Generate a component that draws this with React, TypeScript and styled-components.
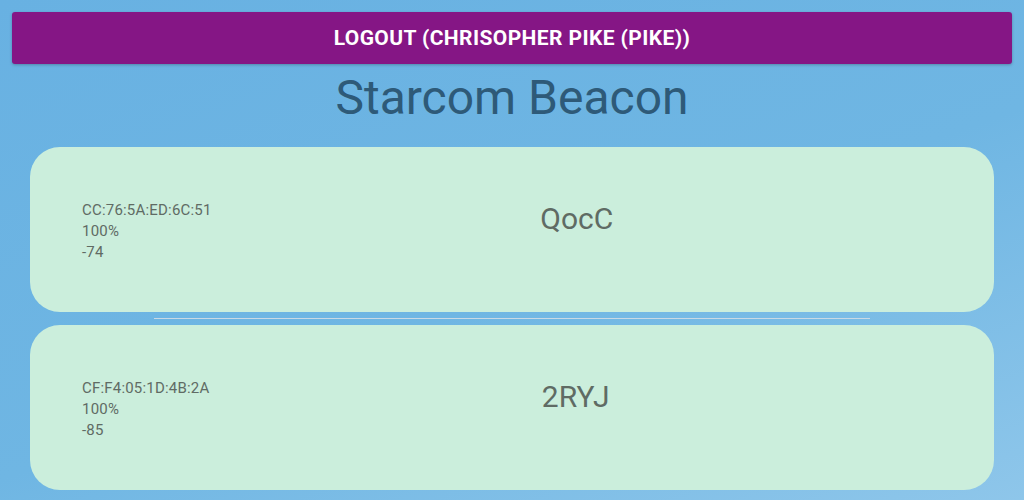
import styled, { createGlobalStyle } from "styled-components";

interface Beacon {
  mac: string;
  battery: string;
  rssi: string;
  name: string;
}

const beacons: Beacon[] = [
  { mac: "CC:76:5A:ED:6C:51", battery: "100%", rssi: "-74", name: "QocC" },
  { mac: "CF:F4:05:1D:4B:2A", battery: "100%", rssi: "-85", name: "2RYJ" },
];

const GlobalStyle = createGlobalStyle`
  html, body {
    margin: 0;
    padding: 0;
  }
  body {
    font-family: Roboto, "Liberation Sans", sans-serif;
    background: linear-gradient(160deg, #68b1e2 0%, #6fb6e3 55%, #8ec6ea 100%);
    min-height: 100vh;
  }
`;

const BeaconCard = ({ mac, battery, rssi, name }: Beacon) => {
  return (
    <Card>
      <Row>
        <Info>
          <Line>{mac}</Line>
          <Line>{battery}</Line>
          <Line>{rssi}</Line>
        </Info>
        <Name>{name}</Name>
      </Row>
    </Card>
  );
};

const App = () => {
  return (
    <Page>
      <GlobalStyle />
      <LogoutButton>Logout (Chrisopher Pike (pike))</LogoutButton>
      <Title>Starcom Beacon</Title>
      {beacons.map((b, i) => (
        <div key={b.mac}>
          {i > 0 && <Divider />}
          <BeaconCard {...b} />
        </div>
      ))}
    </Page>
  );
};

export default App;

const Page = styled.div`
  padding-top: 12px;
  display: flex;
  flex-direction: column;
`;

const LogoutButton = styled.button`
  height: 52px;
  margin: 0 12px;
  border: none;
  border-radius: 3px;
  background: #851685;
  color: #ffffff;
  font-family: Roboto, "Liberation Sans", sans-serif;
  font-size: 21px;
  font-weight: 700;
  letter-spacing: 0.4px;
  text-transform: uppercase;
  box-shadow: 0 1px 3px rgba(0, 0, 0, 0.25);
  cursor: pointer;
`;

const Title = styled.h1`
  margin: 6px 0 21px;
  text-align: center;
  font-size: 48px;
  line-height: 56px;
  font-weight: 400;
  color: #2e5a78;
`;

const Card = styled.div`
  margin: 0 30px;
  background: #cbeedc;
  border-radius: 30px;
  padding: 53px 52px 49px;
`;

const Row = styled.div`
  display: flex;
  align-items: flex-start;
`;

const Info = styled.div`
  display: flex;
  flex-direction: column;
  font-size: 15px;
  letter-spacing: 0.2px;
  line-height: 21px;
  color: #606b64;
`;

const Line = styled.div``;

const Name = styled.div`
  flex: 1;
  margin-top: -2px;
  text-align: center;
  font-size: 30px;
  line-height: 42px;
  color: #5f6b64;
`;

const Divider = styled.hr`
  width: 70%;
  margin: 6px auto;
  border: none;
  border-top: 1px solid #c9d9e4;
`;
